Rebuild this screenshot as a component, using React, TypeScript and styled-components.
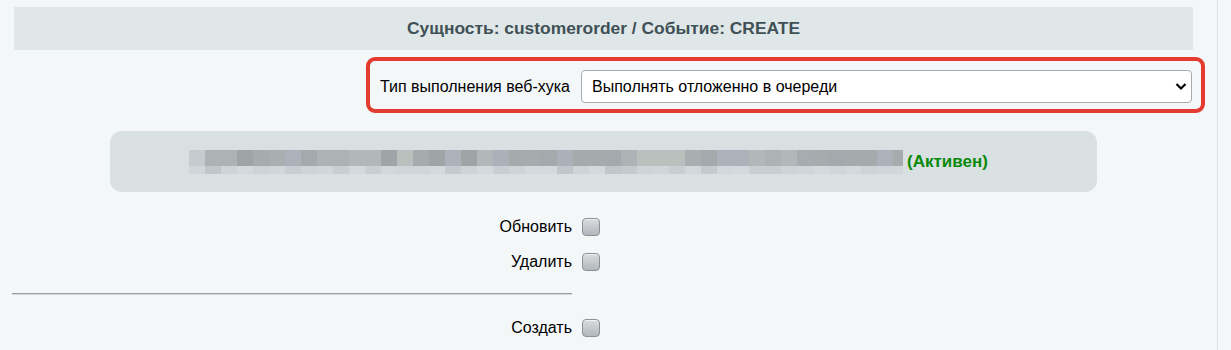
import React from 'react';
import styled, { createGlobalStyle } from 'styled-components';

const GlobalStyle = createGlobalStyle`
    html, body {
        margin: 0;
        padding: 0;
        background: #f4f7f8;
        font-family: "Liberation Sans", Arial, sans-serif;
        color: #000;
    }
`;

const Page = styled.div`
    width: 1218px;
    min-height: 350px;
    box-sizing: border-box;
    border-right: 1px solid #dbe4e8;
    padding: 7px 24px 0 14px;
`;

const Header = styled.div`
    height: 43px;
    background: #e0e7e8;
    display: flex;
    align-items: center;
    justify-content: center;
    font-size: 17.4px;
    font-weight: bold;
    color: #3f5056;
`;

const ModeRow = styled.div`
    display: flex;
    justify-content: flex-end;
    margin-top: 7px;
    margin-right: -12px;
`;

const Highlight = styled.div`
    display: flex;
    align-items: center;
    gap: 11px;
    border: 4px solid #e33b2f;
    border-radius: 9px;
    padding: 9px 9px 6px 10px;
`;

const Label = styled.label`
    font-size: 16px;
    white-space: nowrap;
`;

const SelectWrap = styled.div`
    position: relative;
    width: 611px;
    height: 33px;
`;

const Select = styled.select`
    appearance: none;
    width: 100%;
    height: 100%;
    box-sizing: border-box;
    border: 1px solid #a8abae;
    border-radius: 4px;
    background: #fff;
    padding: 0 30px 0 10px;
    font-family: "Liberation Sans", Arial, sans-serif;
    font-size: 16px;
    color: #000;
`;

const Chevron = styled.svg`
    position: absolute;
    right: 5px;
    top: 12px;
    pointer-events: none;
`;

const StatusPanel = styled.div`
    margin: 18px 96px 0;
    height: 61px;
    border-radius: 12px;
    background: #d8e0e2;
    display: flex;
    align-items: center;
    padding-left: 79px;
`;

const Mosaic = styled.div`
    display: flex;
    height: 24px;
`;

const Cell = styled.div<{ $w: number }>`
    width: ${p => p.$w}px;
    display: flex;
    flex-direction: column;
    > :first-child { height: 16px; }
    > :last-child { height: 8px; }
`;

const Active = styled.span`
    margin-left: 4px;
    color: #0a8a0a;
    font-weight: bold;
    font-size: 17px;
`;

const Options = styled.div`
    margin-top: 17px;
`;

const OptionRow = styled.div`
    display: grid;
    grid-template-columns: 558px auto;
    align-items: center;
    column-gap: 10px;
    height: 35px;
    font-size: 16px;
`;

const OptionLabel = styled.label`
    text-align: right;
`;

const Check = styled.input`
    appearance: none;
    margin: 0;
    width: 18px;
    height: 18px;
    box-sizing: border-box;
    border: 1px solid #8a9094;
    border-radius: 4px;
    background: linear-gradient(#d9dcdf, #b2b7bb);
    box-shadow: inset 0 1px 0 rgba(255,255,255,0.6);
`;

const Divider = styled.div`
    width: 560px;
    margin: 14px 0 15px -2px;
    height: 2px;
    background: linear-gradient(#9b9d9f 50%, #d4d7d9 50%);
`;

const TOP = ['#9fa7a8', '#b0b8ba', '#b5bcbd', '#a3abac', '#abb2b9', '#b8c1be', '#a2aaad', '#a6adb0', '#b1b8ba', '#aab1b8', '#abb3b5', '#a4acae', '#9ea5a7', '#a8afb1', '#bcc2c5'];
const BOTTOM = ['#d3dade', '#bfc7ca', '#cdd4d7', '#d1d8db', '#c8cfd2', '#cfd6d9', '#d0d7da', '#c3cbce'];

function buildCells() {
    let seed = 20240517;
    const next = () => {
        seed = (seed * 1103515245 + 12345) % 2147483648;
        return Math.floor(seed / 65536);
    };
    const cells = [];
    for (let i = 0; i < 45; i++) {
        cells.push({
            w: i === 44 ? 10 : 16,
            top: i === 0 ? '#c5ccd0' : TOP[next() % TOP.length],
            bottom: BOTTOM[next() % BOTTOM.length],
        });
    }
    return cells;
}

const cells = buildCells();

function CheckOption({ label }: { label: string }) {
    return (
        <OptionRow>
            <OptionLabel>{label}</OptionLabel>
            <Check type="checkbox" />
        </OptionRow>
    );
}

export default function App() {
    return (
        <>
            <GlobalStyle />
            <Page>
                <Header>Сущность: customerorder / Событие: CREATE</Header>
                <ModeRow>
                    <Highlight>
                        <Label>Тип выполнения веб-хука</Label>
                        <SelectWrap>
                            <Select defaultValue="queue">
                                <option value="queue">Выполнять отложенно в очереди</option>
                                <option value="now">Выполнять сразу</option>
                            </Select>
                            <Chevron width="12" height="9" viewBox="0 0 12 9">
                                <path d="M1.5 2 L6 6.5 L10.5 2" fill="none" stroke="#000" strokeWidth="2.2" />
                            </Chevron>
                        </SelectWrap>
                    </Highlight>
                </ModeRow>
                <StatusPanel>
                    <Mosaic>
                        {cells.map((c, i) => (
                            <Cell key={i} $w={c.w}>
                                <div style={{ background: c.top }} />
                                <div style={{ background: c.bottom }} />
                            </Cell>
                        ))}
                    </Mosaic>
                    <Active>(Активен)</Active>
                </StatusPanel>
                <Options>
                    <CheckOption label="Обновить" />
                    <CheckOption label="Удалить" />
                    <Divider />
                    <CheckOption label="Создать" />
                </Options>
            </Page>
        </>
    );
}
